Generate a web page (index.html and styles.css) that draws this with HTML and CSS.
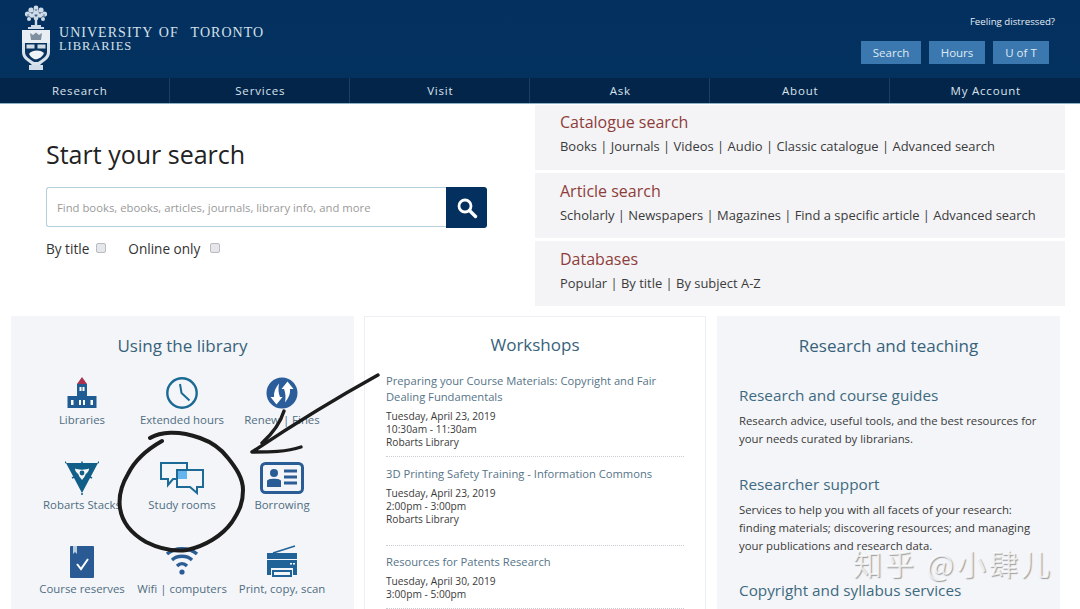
FILE: index.html
```html
<!DOCTYPE html>
<html lang="en">
<head>
<meta charset="utf-8">
<title>University of Toronto Libraries</title>
<link rel="stylesheet" href="styles.css">
</head>
<body>
<div class="page">
  <header class="masthead">
    <div class="brand">
      <svg class="crest" width="32" height="66" viewBox="0 0 32 66">
        <g fill="#cfdbe6">
          <circle cx="16" cy="3" r="2.400"/><circle cx="11" cy="5" r="2.600"/><circle cx="21" cy="5" r="2.600"/><circle cx="7.500" cy="9" r="2.600"/><circle cx="24.500" cy="9" r="2.600"/><circle cx="12" cy="10" r="2.800"/><circle cx="20" cy="10" r="2.800"/><circle cx="16" cy="7" r="2.800"/><circle cx="9" cy="14" r="2"/><circle cx="23" cy="14" r="2"/><circle cx="16" cy="13" r="2.400"/>
          <rect x="14.800" y="14" width="2.400" height="7"/><rect x="11" y="20" width="10" height="2"/><rect x="8" y="22" width="16" height="2"/>
        </g>
        <g fill="#2a4f78"><circle cx="12" cy="8" r=".8"/><circle cx="20" cy="8" r=".8"/><circle cx="16" cy="5" r=".8"/><circle cx="16" cy="11" r=".8"/><circle cx="8" cy="10" r=".7"/><circle cx="24" cy="10" r=".7"/></g>
        <path d="M2 25H30V47C30 54 24 56 20 60H12C8 56 2 54 2 47Z" fill="#d8e2ea"/>
        <path d="M2 25H30V38H2Z" fill="#e8eef3"/>
        <path d="M5 38H27V47C27 52 22 54 18 57H14C10 54 5 52 5 47Z" fill="#0a3460"/>
        <path d="M10 28L13 30L16 27.500L19 30L22 28L21 35H11Z" fill="#7f8f9f"/>
        <path d="M6.500 39.500H14.500V43.500H6.500ZM17.500 39.500H25.500V43.500H17.500Z" fill="#cfdbe6"/>
        <path d="M9 49C11 45 20 44 24 48C22 53 17 55 14 54C12 53 10 51 9 49Z" fill="#eef3f7"/>
        <rect x="9" y="60" width="14" height="5" fill="#cfdbe6"/>
      </svg>
      <div class="wordmark">
        <div class="wordmark-top">UNIVERSITY OF&nbsp; TORONTO</div>
        <div class="wordmark-sub">LIBRARIES</div>
      </div>
    </div>
    <div class="tools">
      <div class="distress">Feeling distressed?</div>
      <div class="tool-buttons">
        <span class="tool-btn tool-search">Search</span>
        <span class="tool-btn tool-hours">Hours</span>
        <span class="tool-btn tool-uoft">U of T</span>
      </div>
    </div>
  </header>
  <nav class="mainnav">
    <span class="nav-item nav-first">Research</span>
    <span class="nav-item">Services</span>
    <span class="nav-item">Visit</span>
    <span class="nav-item">Ask</span>
    <span class="nav-item">About</span>
    <span class="nav-item nav-last">My Account</span>
  </nav>

  <section class="search-row">
    <div class="search-left">
      <h1 class="search-title">Start your search</h1>
      <div class="search-box">
        <div class="search-input">Find books, ebooks, articles, journals, library info, and more</div>
        <div class="search-go">
          <svg width="22" height="22" viewBox="0 0 22 22"><circle cx="9" cy="9" r="6" fill="none" stroke="#fff" stroke-width="2.8"/><path d="M13.5 13.5L19.5 19.5" stroke="#fff" stroke-width="3.4" stroke-linecap="round"/></svg>
        </div>
      </div>
      <div class="search-opts">
        <span class="opt-label">By title</span><span class="check"></span>
        <span class="opt-label opt-second">Online only</span><span class="check check-second"></span>
      </div>
    </div>
    <div class="search-right">
      <div class="panel">
        <h2 class="panel-title">Catalogue search</h2>
        <p class="panel-links">Books | Journals | Videos | Audio | Classic catalogue | Advanced search</p>
      </div>
      <div class="panel">
        <h2 class="panel-title">Article search</h2>
        <p class="panel-links">Scholarly | Newspapers | Magazines | Find a specific article | Advanced search</p>
      </div>
      <div class="panel">
        <h2 class="panel-title">Databases</h2>
        <p class="panel-links">Popular | By title | By subject A-Z</p>
      </div>
    </div>
  </section>

  <section class="cards">
    <article class="card card-using">
      <h2 class="card-title">Using the library</h2>
      <div class="icon-grid">
        <div class="tile">
          <svg class="tile-icon" width="34" height="34" viewBox="0 0 34 34">
            <path d="M17 1L22 8H12Z" fill="#a8324f"/>
            <path d="M12 8H22V20H31.500V32H2.500V20H12Z" fill="#1f5c94"/>
            <path d="M14.500 11h2v4h-2ZM17.500 11h2v4h-2ZM6 24h2.500v5H6ZM14 24h2v5h-2ZM18 24h2v5h-2ZM25.500 24h2.500v5h-2.500Z" fill="#fff"/>
          </svg>
          <span class="tile-label">Libraries</span>
        </div>
        <div class="tile">
          <svg class="tile-icon" width="34" height="34" viewBox="0 0 34 34">
            <circle cx="17" cy="17" r="14.7" fill="none" stroke="#1a6a94" stroke-width="2.4"/>
            <path d="M15 8L16.500 17L24.500 24.500" fill="none" stroke="#1a6a94" stroke-width="2"/>
          </svg>
          <span class="tile-label">Extended hours</span>
        </div>
        <div class="tile">
          <svg class="tile-icon" width="34" height="34" viewBox="0 0 34 34">
            <circle cx="17" cy="17" r="15.500" fill="#2b5d9b"/>
            <path d="M22.500 5.500L28.500 13H25C25.500 18 23.500 22 20 26.500C21 21 20.500 17 19 13H16.500Z" fill="#fff"/>
            <path d="M11.500 28.500L5.500 21H9C8.500 16 10.500 12 14 7.500C13 13 13.500 17 15 21H17.500Z" fill="#fff"/>
          </svg>
          <span class="tile-label">Renew | Fines</span>
        </div>
        <div class="tile">
          <svg class="tile-icon" width="34" height="34" viewBox="0 0 34 34">
            <path d="M1 2H33L17 32Z" fill="#115e88"/>
            <path d="M1 2l-1.500-1.500M33 2l1.500-1.500M17 32v2M9 16l-2 1M25 16l2 1M17 2V.5" stroke="#115e88" stroke-width="1.500"/>
            <path d="M10 7.500C13 9 21 9 24 7.500C24 11 21.500 12 20.500 13.500C20 15.500 18.500 17 17 19C15.500 17 14 15.500 13.500 13.500C12.500 12 10 11 10 7.500Z" fill="#f4f5f8"/>
            <circle cx="17" cy="12" r="2.400" fill="#115e88"/>
          </svg>
          <span class="tile-label">Robarts Stacks</span>
        </div>
        <div class="tile">
          <svg class="tile-icon" width="46" height="34" viewBox="0 0 46 34">
            <path d="M18 18H14L9 24V18H2V2H28V10" fill="none" stroke="#1e6a96" stroke-width="2"/>
            <rect x="18" y="9" width="10" height="9" fill="#64b5ee"/>
            <path d="M18 9H44V26H38V32L31 26H18Z" fill="none" stroke="#1e6a96" stroke-width="2"/>
          </svg>
          <span class="tile-label">Study rooms</span>
        </div>
        <div class="tile">
          <svg class="tile-icon" width="44" height="32" viewBox="0 0 44 32">
            <rect x="1.500" y="1.500" width="41" height="29" rx="4" fill="none" stroke="#2a5d95" stroke-width="3"/>
            <circle cx="14" cy="11" r="4" fill="#2a5d95"/>
            <path d="M7 25V19C7 16 21 16 21 19V25Z" fill="#2a5d95"/>
            <path d="M24 9H37M24 15H37M24 21H37" stroke="#2a5d95" stroke-width="3"/>
          </svg>
          <span class="tile-label">Borrowing</span>
        </div>
        <div class="tile">
          <svg class="tile-icon" width="26" height="34" viewBox="0 0 26 34">
            <rect x="1" y="1" width="24" height="32" rx="1" fill="#2a5a94"/>
            <path d="M4 1H8V9L6 7L4 9Z" fill="#b9cde0"/>
            <path d="M8 19L12 24L19 14" fill="none" stroke="#fff" stroke-width="2"/>
          </svg>
          <span class="tile-label">Course reserves</span>
        </div>
        <div class="tile">
          <svg class="tile-icon" width="34" height="34" viewBox="0 0 34 34">
            <path d="M2 9C10 2 24 2 32 9M7 15C12 10 22 10 27 15M12 21C15 18 19 18 22 21" fill="none" stroke="#2a5d96" stroke-width="3.400"/>
            <circle cx="17" cy="27" r="2.600" fill="#2a5d96"/>
          </svg>
          <span class="tile-label">Wifi | computers</span>
        </div>
        <div class="tile">
          <svg class="tile-icon" width="32" height="34" viewBox="0 0 32 34">
            <path d="M7 8L29 1" stroke="#1f6398" stroke-width="1.500"/>
            <path d="M1 8H31V14H1Z" fill="#1f6398"/>
            <path d="M1 15H31V30H27V23H5V30H1Z" fill="#1f6398"/>
            <path d="M24 18h2v1.600h-2ZM27 18h2v1.600h-2Z" fill="#fff"/>
            <path d="M6 25H26V32H6Z" fill="#1f6398"/>
            <path d="M8 27H24V30H8Z" fill="#f4f5f8"/>
          </svg>
          <span class="tile-label">Print, copy, scan</span>
        </div>
      </div>
    </article>

    <article class="card card-workshops">
      <h2 class="card-title workshops-title">Workshops</h2>
      <div class="ws-item">
        <div class="ws-name">Preparing your Course Materials: Copyright and Fair Dealing Fundamentals</div>
        <div class="ws-meta">Tuesday, April 23, 2019<br>10:30am - 11:30am<br>Robarts Library</div>
      </div>
      <div class="ws-item ws-tall">
        <div class="ws-name">3D Printing Safety Training - Information Commons</div>
        <div class="ws-meta">Tuesday, April 23, 2019<br>2:00pm - 3:00pm<br>Robarts Library</div>
      </div>
      <div class="ws-item">
        <div class="ws-name">Resources for Patents Research</div>
        <div class="ws-meta">Tuesday, April 30, 2019<br>3:00pm - 5:00pm</div>
      </div>
    </article>

    <article class="card card-research">
      <h2 class="card-title">Research and teaching</h2>
      <h3 class="res-head res-first">Research and course guides</h3>
      <p class="res-text">Research advice, useful tools, and the best resources for your needs curated by librarians.</p>
      <h3 class="res-head">Researcher support</h3>
      <p class="res-text">Services to help you with all facets of your research: finding materials; discovering resources; and managing your publications and research data.</p>
      <h3 class="res-head">Copyright and syllabus services</h3>
    </article>
  </section>

  <svg class="scribble" width="1080" height="609" viewBox="0 0 1080 609">
    <path d="M150 438C160 432 178 430 200 438C214 443 222 450 228 458C236 468 243 478 243 490C243 502 240 510 232 522C222 536 205 546 187 550C172 552 158 548 146 542C132 534 122 522 120 508C118 494 122 484 128 474C134 462 146 450 162 441" fill="none" stroke="#1c1c1c" stroke-width="4" stroke-linecap="round"/>
    <path d="M378 375C340 396 300 420 252 452C270 452 286 452 301 447M284 411C280 424 272 434 262 443" fill="none" stroke="#1c1c1c" stroke-width="3.400" stroke-linecap="round" stroke-linejoin="round"/>
  </svg>
  <div class="watermark">知乎 @小肆儿</div>
</div>
</body>
</html>
```
FILE: styles.css
```css
* { box-sizing: border-box; }
html, body { margin: 0; padding: 0; background: #fff; }
body { font-family: "Open Sans", "Liberation Sans", sans-serif; color: #333; }
h1, h2, h3, p { margin: 0; font-weight: 400; }

.page { position: relative; width: 1080px; height: 609px; overflow: hidden; }

.masthead { height: 78px; background: linear-gradient(#03305f, #04325f); display: flex; justify-content: space-between; }
.brand { display: flex; align-items: flex-start; padding: 5px 0 0 20px; }
.crest { display: block; }
.wordmark { margin: 21px 0 0 7px; font-family: "Liberation Serif", serif; color: #d5e0ea; }
.wordmark-top { font-size: 14px; line-height: 14px; letter-spacing: 1.03px; word-spacing: 1.5px; white-space: nowrap; }
.wordmark-sub { font-size: 12.5px; line-height: 13px; letter-spacing: .95px; }

.tools { padding: 15px 25px 0 0; display: flex; flex-direction: column; align-items: flex-end; }
.distress { font-size: 9.7px; line-height: 14px; color: #e4edf5; }
.tool-buttons { display: flex; margin: 12px 6px 0 0; }
.tool-btn { display: block; height: 23px; line-height: 23px; background: #3c78b0; color: #dfeaf3; font-size: 11.5px; text-align: center; }
.tool-search { width: 60px; }
.tool-hours { width: 56px; margin-left: 8px; }
.tool-uoft { width: 56px; margin-left: 8px; }

.mainnav { height: 26px; background: #04254a; border-bottom: 1px solid #8db0c6; display: grid; grid-template-columns: 169px 180px 180px 180px 180px 191px; }
.nav-item { border-left: 1px solid #1d3d61; padding-left: 1.5px; color: #d8e3ec; font-size: 11.5px; letter-spacing: .8px; line-height: 25px; text-align: center; }
.nav-first { border-left: 0; padding-right: 11px; }

.search-row { display: grid; grid-template-columns: 535px 530px; height: 210px; }
.search-left { padding: 32px 0 0 46px; }
.search-title { font-size: 25px; line-height: 36px; color: #222; }
.search-box { display: flex; width: 441px; height: 41px; margin-top: 15px; }
.search-input { flex: 1; height: 40px; border: 1px solid #b5d0dc; border-right: 0; border-radius: 3px 0 0 3px; padding: 0 10px; font-size: 11.3px; line-height: 39px; color: #9a9a9a; white-space: nowrap; }
.search-go { width: 41px; background: #03305f; border-radius: 0 3px 3px 0; display: flex; align-items: center; justify-content: center; }
.search-opts { display: flex; align-items: center; margin-top: 12px; font-size: 13.6px; line-height: 18px; color: #333; }
.check { width: 10px; height: 10px; margin: -3px 0 0 7px; background: #e6e7ea; border: 1px solid #b8bcc2; border-radius: 2px; }
.opt-second { margin-left: 22px; }
.check-second { margin-left: 10px; }

.search-right { display: flex; flex-direction: column; gap: 3px; padding-top: 1px; }
.panel { height: 65px; background: #f4f4f7; padding: 7px 25px 0; }
.panel:first-child { padding-top: 6px; }
.panel-title { font-size: 16px; line-height: 22px; color: #8f3d3a; }
.panel-links { margin-top: 3px; font-size: 12.95px; line-height: 20px; color: #3a3a3a; white-space: nowrap; }

.cards { display: flex; padding: 2px 0 0 11px; gap: 10px; }
.card { width: 343px; height: 300px; background: #f4f5f8; }
.card-workshops { width: 342px; background: #fff; border: 1px solid #eeeff3; padding: 0 21px; }
.card-research { margin-left: 1px; padding: 0 22px; }
.card-title { font-size: 17px; line-height: 26px; color: #37627b; text-align: center; padding-top: 17px; height: 50px; }

.icon-grid { display: grid; grid-template-columns: repeat(3, 100px); grid-auto-rows: 84.5px; padding: 10px 0 0 21px; }
.tile { display: flex; flex-direction: column; align-items: center; white-space: nowrap; }
.tile-icon { display: block; height: 34px; }
.tile-label { margin-top: 2px; font-size: 11.4px; line-height: 16px; color: #4f6d82; }

.workshops-title { padding-top: 15px; height: 56px; }
.ws-item { border-bottom: 1px dotted #c9ccd2; padding-bottom: 7px; margin-bottom: 9px; }
.ws-tall { padding-bottom: 19px; margin-bottom: 8px; }
.ws-name { font-size: 11.2px; line-height: 16px; color: #557487; margin-bottom: 5px; }
.ws-meta { font-size: 10.2px; line-height: 13px; color: #3a3a3a; }

.res-first { margin-top: 17px; }
.res-head { font-size: 15.3px; line-height: 24px; color: #3d6a80; }
.res-text { margin: 5px 0 23.5px; font-size: 11.35px; line-height: 18px; color: #3a3a3a; }

.scribble { position: absolute; left: 0; top: 0; pointer-events: none; }
.watermark { position: absolute; left: 853px; top: 543px; font-family: "Noto Sans CJK SC", sans-serif; font-size: 29px; line-height: 40px; letter-spacing: 3px; color: rgba(255,255,255,.75); text-shadow: 1px 1px 1px rgba(90,90,90,.55); white-space: nowrap; }
```
